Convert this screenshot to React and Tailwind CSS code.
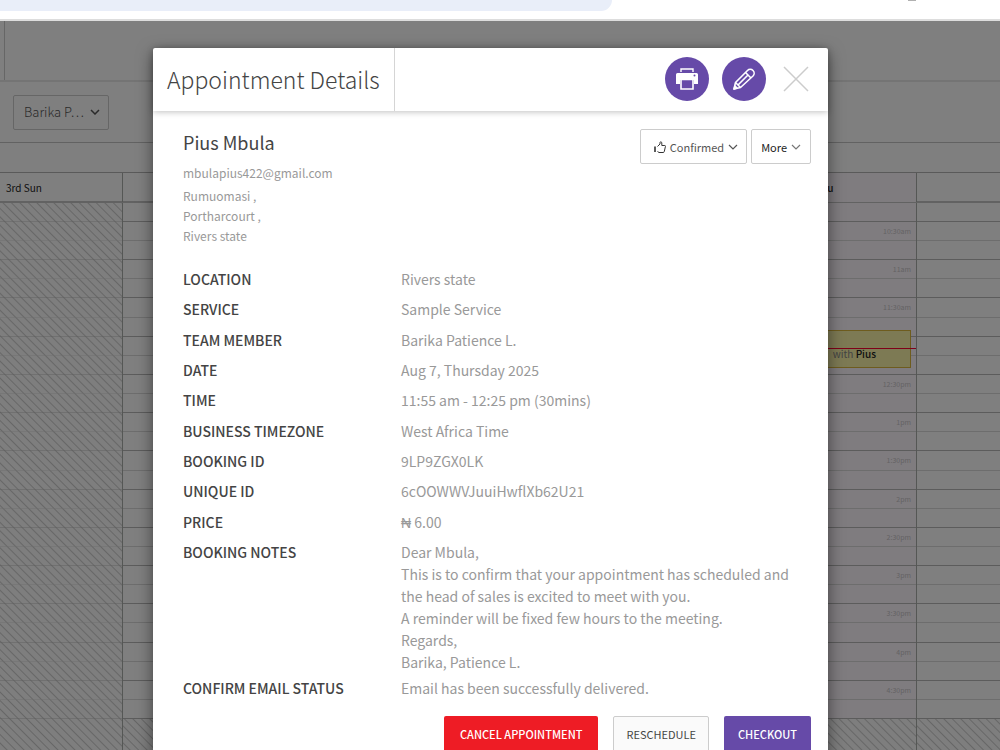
import { useState } from "react";
import clsx from "clsx";

const slots = [
  "10:30am",
  "11am",
  "11:30am",
  "12pm",
  "12:30pm",
  "1pm",
  "1:30pm",
  "2pm",
  "2:30pm",
  "3pm",
  "3:30pm",
  "4pm",
  "4:30pm",
];

const days = [
  { label: "3rd Sun", closed: true },
  { label: "" },
  { label: "" },
  { label: "" },
  { label: "7th Thu", today: true },
  { label: "" },
];

const details = [
  ["Location", "Rivers state"],
  ["Service", "Sample Service"],
  ["Team Member", "Barika Patience L."],
  ["Date", "Aug 7, Thursday 2025"],
  ["Time", "11:55 am - 12:25 pm (30mins)"],
  ["Business Timezone", "West Africa Time"],
  ["Booking ID", "9LP9ZGX0LK"],
  ["Unique ID", "6cOOWWVJuuiHwflXb62U21"],
  ["Price", "₦ 6.00"],
];

const notes = [
  "Dear Mbula,",
  "This is to confirm that your appointment has scheduled and the head of sales is excited to meet with you.",
  "A reminder will be fixed few hours to the meeting.",
  "Regards,",
  "Barika, Patience L.",
];

const Chevron = ({ className }) => (
  <svg viewBox="0 0 10 6" className={className} fill="none" stroke="currentColor">
    <path d="M1 1l4 4 4-4" />
  </svg>
);

const PrintIcon = () => (
  <svg viewBox="0 0 22 22" className="size-[22px]" fill="none">
    <path d="M5 4V1h12v3" stroke="white" strokeWidth="1.4" />
    <path d="M1.500 5h19A1.500 1.500 0 0 1 22 6.500V16h-4v-4H4v4H0V6.500A1.500 1.500 0 0 1 1.500 5z" fill="white" />
    <path d="M5 11.500h12V21H5z" fill="#664aa8" stroke="white" strokeWidth="1.600" />
    <circle cx="18.500" cy="7.500" r="1" fill="#664aa8" />
  </svg>
);

const PencilIcon = () => (
  <svg
    viewBox="0 0 22 22"
    className="size-[22px]"
    fill="none"
    stroke="white"
    strokeWidth="1.6"
    strokeLinejoin="round"
  >
    <path d="M1 21l1.500-6.500L14.500 2.500a3.800 3.800 0 0 1 5.500 5.500L7.500 19.500z" />
    <path d="M2.500 14.500l5 5M12.500 4.500l5.500 5.500M5 17L15.500 6.500" />
    <path d="M1 21l1-3 2 2z" fill="white" />
  </svg>
);

const ThumbIcon = () => (
  <svg viewBox="0 0 12 12" className="size-3" fill="none" stroke="#333" strokeLinejoin="round">
    <path d="M3.500 5.500L6 3V1.500C6 .5 7.800.5 7.800 2v2.500h3c.8 0 .8 1 .5 1.500l-1 4.500c-.2.700-.5 1-1.200 1H5l-1.500-1" />
    <path d="M1 5.500v5.500" strokeWidth="1.600" />
  </svg>
);

const DayColumn = ({ closed, today, children }) => (
  <div
    className={clsx(
      "relative flex flex-col border-r border-[#aaaeaa] last:border-r-0",
      closed &&
        "bg-[repeating-linear-gradient(45deg,#fcfcfc_0px,#fcfcfc_4px,#cfcfcf_5px,#fcfcfc_6px)]",
      today && "bg-[#fff9ff]"
    )}
  >
    <div className={clsx("h-[19px] border-b border-[#bbbbbb]", closed && "opacity-40")} />
    <div className={clsx("flex h-[497px] flex-col", closed && "opacity-40")}>
      {slots.map((slot) => (
        <div key={slot} className="flex flex-1 flex-col border-b border-[#b8b8b8]">
          <div className="flex-1 border-b border-[#dadada] pr-[5px] text-right text-[7px] leading-[18px] text-[#c8c5c8]">
            {today && slot}
          </div>
          <div className="flex-1" />
        </div>
      ))}
    </div>
    <div className="flex-1 bg-[repeating-linear-gradient(45deg,#fcfcfc_0px,#fcfcfc_4px,#cfcfcf_5px,#fcfcfc_6px)]" />
    {children}
  </div>
);

const Calendar = () => (
  <div className="flex h-full flex-col bg-white">
    <div className="flex h-[61px] border-b-2 border-[#e8e8e8]">
      <div className="w-[5px] border-r border-[#cccccc]" />
    </div>
    <div className="flex h-[61px] items-center border-b border-[#c4c4c4] px-[13px]">
      <button className="flex h-[35px] w-24 items-center justify-between rounded-xs border border-[#cccccc] pr-2 pl-[10px] text-[13px] font-light text-[#555]">
        Barika P…
        <Chevron className="h-[6px] w-[10px] stroke-[1.5]" />
      </button>
    </div>
    <div className="h-[30px] border-b border-[#b4b4b4]" />
    <div className="grid h-[30px] grid-cols-[123px_repeat(4,1fr)_83px] border-b-2 border-[#c4c4c4] text-center text-[10px] leading-[29px] text-[#222]">
      {days.map((day, i) => (
        <div
          key={i}
          className={clsx(
            "border-r border-[#aaaeaa] last:border-r-0",
            i === 0 && "pl-[6px] text-left",
            day.today && "bg-[#fff9ff] pr-1 font-medium"
          )}
        >
          {day.label}
        </div>
      ))}
    </div>
    <div className="grid flex-1 grid-cols-[123px_repeat(4,1fr)_83px]">
      {days.map((day, i) => (
        <DayColumn key={i} closed={day.closed} today={day.today}>
          {day.today && (
            <>
              <div className="absolute top-[127px] right-[5px] left-0 flex h-[38px] items-end justify-end border border-[#dcb83c] bg-[#fbf5a8] pr-[34px] text-[10px] text-[#888]">
                <span className="leading-[26px]">
                  with <b className="font-medium text-[#222]">Pius</b>
                </span>
              </div>
              <div className="absolute top-[145px] right-0 left-0 h-px bg-[#ff0030]" />
            </>
          )}
        </DayColumn>
      ))}
    </div>
  </div>
);

const AppointmentModal = ({ onClose }) => (
  <div
    role="dialog"
    aria-labelledby="modal-title"
    className="mx-auto max-w-[675px] rounded-xs bg-white shadow-[0_5px_16px_rgba(0,0,0,0.5)]"
  >
    <header className="flex h-[63px] items-center rounded-t-xs shadow-[0_1px_6px_rgba(0,0,0,0.25)]">
      <h1
        id="modal-title"
        className="h-full border-r border-[#d5d5d5] px-[14px] text-[23px] leading-[62px] font-light text-[#444]"
      >
        Appointment Details
      </h1>
      <div className="ml-auto flex items-center gap-[13px] pr-[19px] pb-0.5">
        <button aria-label="Print" className="flex size-11 items-center justify-center rounded-full bg-[#664aa8]">
          <PrintIcon />
        </button>
        <button aria-label="Edit" className="flex size-11 items-center justify-center rounded-full bg-[#664aa8]">
          <PencilIcon />
        </button>
        <button aria-label="Close" onClick={onClose} className="ml-1 text-[#cccccc]">
          <svg viewBox="0 0 26 26" className="size-[26px]" stroke="currentColor" strokeWidth="1.5">
            <path d="M1 1l24 24M25 1L1 25" />
          </svg>
        </button>
      </div>
    </header>

    <div className="pt-[18px] pr-[17px] pb-5 pl-[30px]">
      <div className="flex items-start justify-between">
        <div className="text-[#999]">
          <h2 className="text-[18px] leading-[26px] text-[#444]">Pius Mbula</h2>
          <p className="mt-2 mb-[3px] text-[12px] leading-5">mbulapius422@gmail.com</p>
          <address className="text-[12px] leading-5 not-italic">
            Rumuomasi ,<br />
            Portharcourt ,<br />
            Rivers state
          </address>
        </div>
        <div className="flex gap-1 text-[11px] leading-4">
          <button className="flex h-[35px] items-center gap-1 rounded-xs border border-[#cccccc] pr-2 pl-[13px] text-[#555]">
            <ThumbIcon />
            Confirmed
            <Chevron className="h-[6px] w-[10px] stroke-[1.2]" />
          </button>
          <button className="flex h-[35px] items-center gap-1 rounded-xs border border-[#cccccc] px-[9px] text-[#222]">
            More
            <Chevron className="h-[6px] w-[10px] stroke-[1.2] text-[#777]" />
          </button>
        </div>
      </div>

      <table className="mt-[18px] w-full text-left text-[14px] leading-[22px] text-[#999]">
        <tbody>
          {details.map(([label, value]) => (
            <tr key={label} className="h-[30px] nth-[3n]:h-[31px]">
              <th className="w-[218px] font-medium text-[#444] uppercase">{label}</th>
              <td>{value}</td>
            </tr>
          ))}
          <tr className="align-top">
            <th className="pt-1 font-medium text-[#444] uppercase">Booking Notes</th>
            <td className="pt-1 pr-5">
              {notes.map((line) => (
                <p key={line}>{line}</p>
              ))}
            </td>
          </tr>
          <tr className="h-[30px]">
            <th className="font-medium text-[#444] uppercase">Confirm Email Status</th>
            <td>Email has been successfully delivered.</td>
          </tr>
        </tbody>
      </table>

      <div className="mt-[13px] flex justify-end gap-[15px] text-[11px] font-medium">
        <button className="h-9 rounded-xs bg-[#ee1c25] px-4 text-white">CANCEL APPOINTMENT</button>
        <button className="h-9 rounded-xs border border-[#cccccc] bg-[#fafafa] px-3 font-normal text-[#444]">
          RESCHEDULE
        </button>
        <button className="h-9 rounded-xs bg-[#664aa8] px-[14px] text-white">CHECKOUT</button>
      </div>
    </div>
  </div>
);

export default function App() {
  const [open, setOpen] = useState(true);

  return (
    <div className="flex h-screen flex-col overflow-hidden font-['Noto_Sans_CJK_SC',sans-serif]">
      <div className="flex h-[21px] shrink-0 justify-between border-b-2 border-[#dddddd] bg-white">
        <div className="h-[11px] w-[612px] rounded-br-2xl bg-[#e9eef9]" />
        <div className="mr-[84px] h-px w-2 bg-[#b0b0b0]" />
      </div>
      <main className="relative min-h-0 flex-1">
        <Calendar />
        {open && (
          <div className="absolute inset-0 overflow-hidden bg-black/50 pt-[27px] pr-[19px]">
            <AppointmentModal onClose={() => setOpen(false)} />
          </div>
        )}
      </main>
    </div>
  );
}
